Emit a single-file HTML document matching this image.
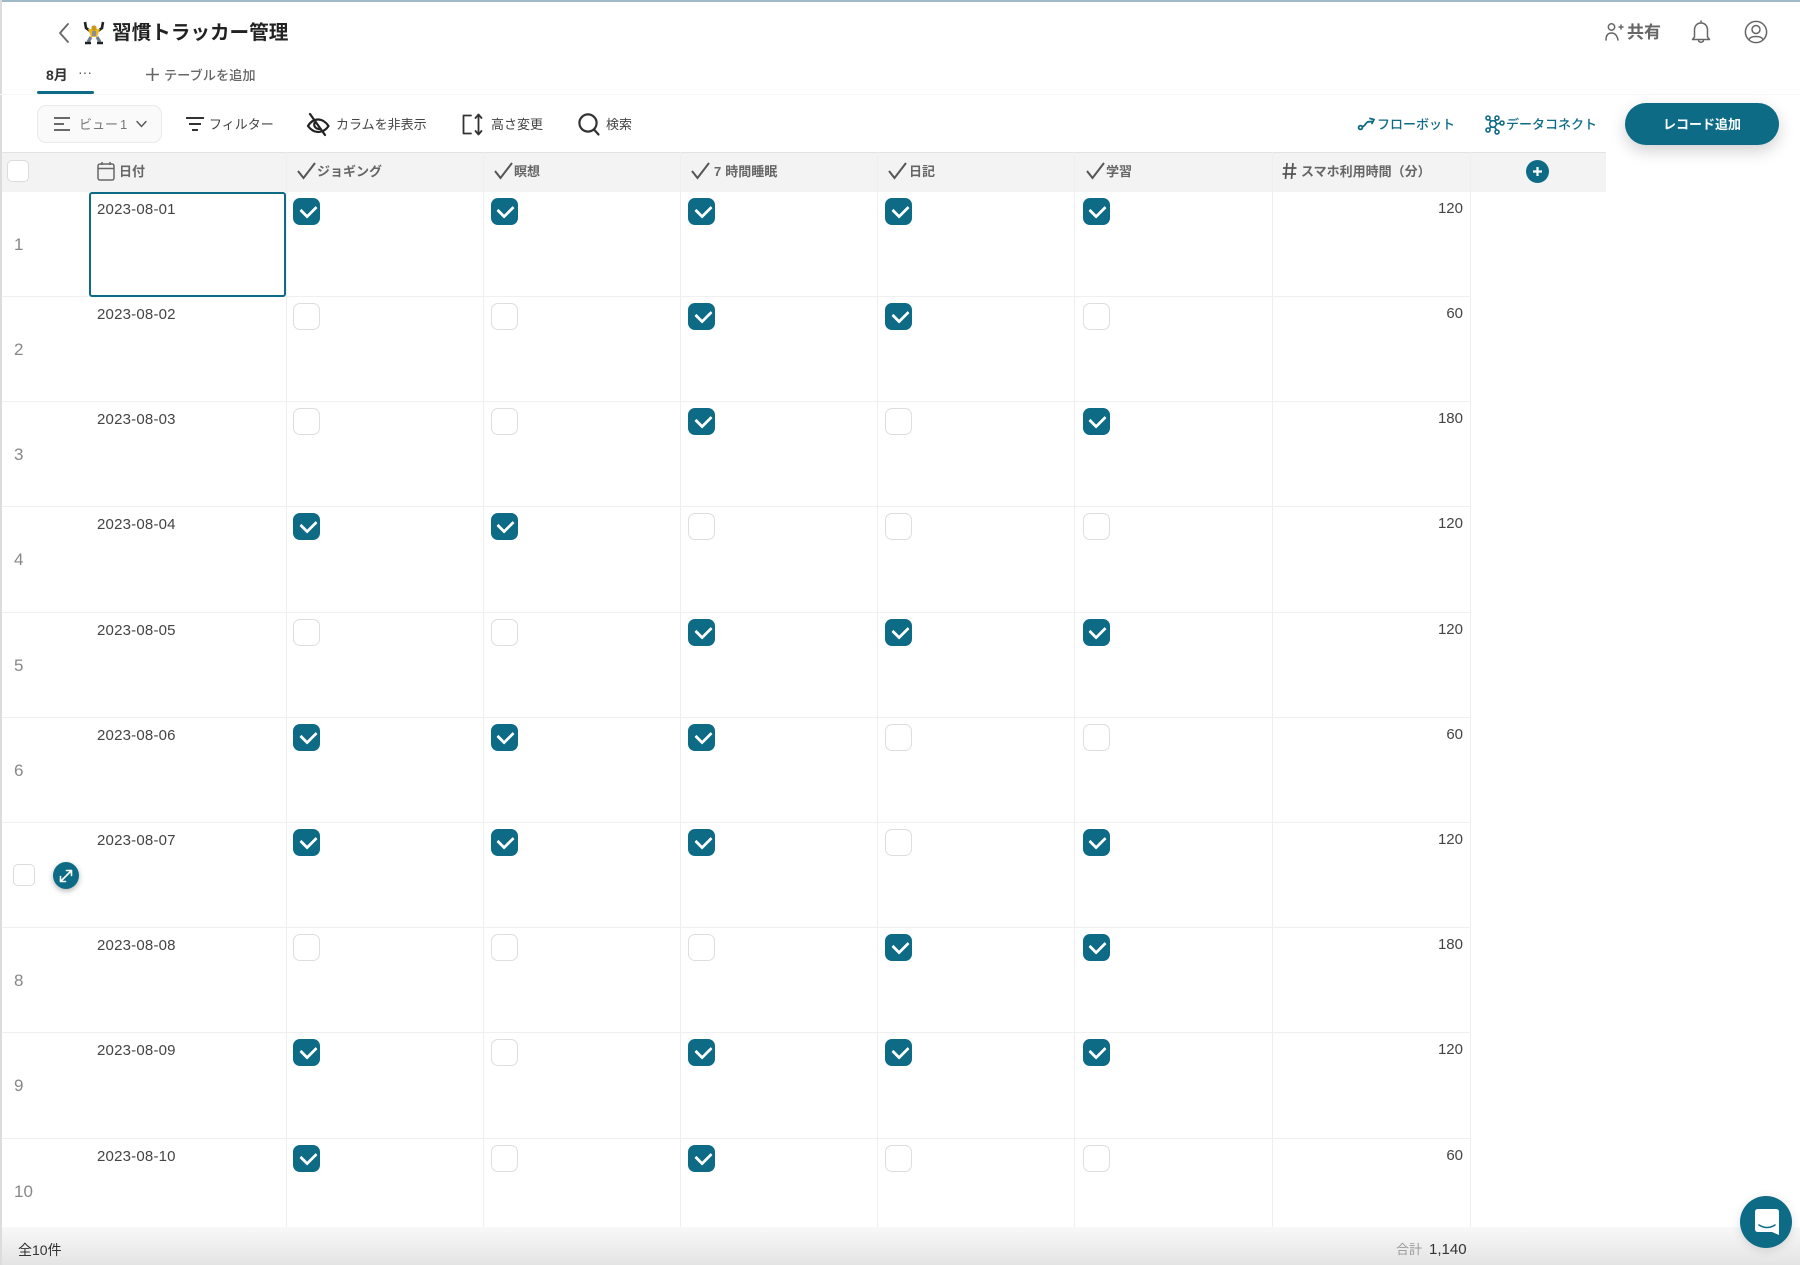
<!DOCTYPE html>
<html lang="ja"><head><meta charset="utf-8"><title>習慣トラッカー管理</title>
<style>
*{box-sizing:border-box}
html,body{margin:0;padding:0;background:#fff}
body{width:1800px;height:1265px;position:relative;overflow:hidden;font-family:"Liberation Sans","Noto Sans CJK JP",sans-serif;color:#333}
.a{position:absolute;white-space:nowrap}
svg{position:absolute;overflow:visible}
.tb{font-size:13px;line-height:20px;top:115px;color:#444}
.tl{font-size:13px;line-height:20px;top:115px;color:#0e6b85;font-weight:500}
.hd{font-size:13px;line-height:20px;top:162px;color:#666;font-weight:700}
.v{position:absolute;top:152px;height:1075px;width:1px;background:#efefef}
.hv{position:absolute;top:152px;height:40px;width:1px;background:#e6e6e6}
.r{position:absolute;left:2px;width:1468px;height:105.2px;border-bottom:1px solid #f0f0f0}
.r .n{position:absolute;left:12px;top:41px;font-size:17px;line-height:24px;color:#888}
.r .d{position:absolute;left:95px;top:7px;font-size:15px;line-height:22px;color:#444;letter-spacing:.2px}
.r .m{position:absolute;right:7px;top:6px;font-size:15px;line-height:22px;color:#444}
.b{position:absolute;top:6px;width:27px;height:27px;border-radius:7px;border:1px solid #dedede;background:#fff}
.on{background:#0e6b85;border-color:#0e6b85}
.on::after{content:"";position:absolute;left:6.500px;top:5px;width:12px;height:8px;border-left:3.500px solid #fff;border-bottom:3.500px solid #fff;border-radius:1px;transform:rotate(-45deg)}
.c1{left:291px}.c2{left:488.500px}.c3{left:686px}.c4{left:883px}.c5{left:1080.500px}
</style></head><body>

<div class="a" style="left:0;top:0;width:1800px;height:2px;background:#9fbac6"></div>
<div class="a" style="left:0;top:0;width:2px;height:1265px;background:#dcdcdc"></div>

<svg style="left:56px;top:21px" width="16" height="24" viewBox="0 0 16 24" fill="none" stroke="#666" stroke-width="1.8" stroke-linecap="round" stroke-linejoin="round"><path d="M12 3 L4 12 L12 21"/></svg>
<svg style="left:82px;top:20px" width="24" height="25" viewBox="0 0 24 25"><path d="M3 2 L4 8 L8 11 M21 2 L20 8 L16 11" fill="none" stroke="#222" stroke-width="2.600"/><path d="M6 9 H18 L15 17 H9 Z" fill="#e8b923"/><circle cx="12" cy="8" r="2.600" fill="#c9971a"/><rect x="10" y="11" width="4" height="5" fill="#8b8f90"/><path d="M9 17 L6 22 M15 17 L18 22" stroke="#6f7f8c" stroke-width="3.200"/><path d="M3 23 H9 M15 23 H21" stroke="#222" stroke-width="2.600"/></svg>
<div class="a" style="left:112px;top:18px;font-size:19.6px;line-height:30px;font-weight:700;color:#222">習慣トラッカー管理</div>

<svg style="left:1605px;top:22px" width="22" height="22" viewBox="0 0 22 22" fill="none" stroke="#666" stroke-width="1.500" stroke-linecap="round"><circle cx="6.500" cy="5" r="3.200"/><path d="M1 18 C1 13 3 11 6.500 11 C10 11 12 13 13 18"/><path d="M16 3 V7 M14 5 H18"/></svg>
<div class="a" style="left:1627px;top:20px;font-size:17px;line-height:26px;color:#666;font-weight:700">共有</div>
<svg style="left:1689px;top:20px" width="24" height="24" viewBox="0 0 24 24" fill="none" stroke="#666" stroke-width="1.500" stroke-linecap="round" stroke-linejoin="round"><path d="M12 1 V3 M5.500 17 V10 C5.500 6 8 3 12 3 C16 3 18.500 6 18.500 10 V17 L20.500 19.500 H3.500 Z"/><path d="M9.500 20 C9.500 23 14.500 23 14.500 20"/></svg>
<svg style="left:1744px;top:20px" width="24" height="24" viewBox="0 0 24 24" fill="none" stroke="#666" stroke-width="1.500" stroke-linecap="round"><circle cx="12" cy="12" r="10.600"/><circle cx="12" cy="9.500" r="4"/><path d="M5 19.500 C6.500 15.500 17.500 15.500 19 19.500"/></svg>

<div class="a" style="left:46px;top:65px;font-size:14px;line-height:20px;font-weight:700;color:#333">8月</div>
<div class="a" style="left:78px;top:62px;font-size:14px;line-height:20px;color:#555;letter-spacing:0">···</div>
<div class="a" style="left:37px;top:91px;width:57px;height:3px;background:#0e6b85;border-radius:2px"></div>
<svg style="left:145px;top:67px" width="15" height="15" viewBox="0 0 15 15" stroke="#666" stroke-width="1.600"><path d="M7.500 1 V14 M1 7.500 H14"/></svg>
<div class="a" style="left:164px;top:65.500px;font-size:13.200px;line-height:20px;color:#666;font-weight:500">テーブルを追加</div>
<div class="a" style="left:0;top:94px;width:1800px;height:1px;background:#f7f7f7"></div>

<div class="a" style="left:37px;top:105px;width:125px;height:38px;border:1px solid #eaeaea;border-radius:9px;background:#fafafa"></div>
<svg style="left:54px;top:116px" width="17" height="16" viewBox="0 0 17 16" stroke="#555" stroke-width="1.800"><path d="M0 2 H16 M0 8 H10 M0 14 H16"/></svg>
<div class="a tb" style="left:79px;color:#777">ビュー<span style="margin-left:2px">1</span></div>
<svg style="left:136px;top:120px" width="11" height="8" viewBox="0 0 11 8" fill="none" stroke="#555" stroke-width="1.400" stroke-linecap="round"><path d="M1 1.500 L5.500 6.500 L10 1.500"/></svg>
<svg style="left:186px;top:116px" width="18" height="16" viewBox="0 0 18 16" stroke="#333" stroke-width="2"><path d="M0 2 H18 M3 8 H15 M6 14 H12"/></svg>
<div class="a tb" style="left:209px">フィルター</div>
<svg style="left:307px;top:112px" width="22" height="24" viewBox="0 0 22 24" fill="none" stroke="#222" stroke-width="2.200" stroke-linecap="round" stroke-linejoin="round"><path d="M1 14 C4 9 8 7.500 11 7.500 C15 7.500 19 10 21.500 14 C19 18 15 20 11 20 C7 20 4 18 1 14 Z"/><path d="M7.500 11 C6.500 14 8.500 17 12.500 17"/><path d="M3 2 L18 23"/></svg>
<div class="a tb" style="left:336px">カラムを非表示</div>
<svg style="left:462px;top:113px" width="22" height="23" viewBox="0 0 22 23" fill="none" stroke="#333" stroke-width="1.800" stroke-linecap="round" stroke-linejoin="round"><path d="M9 2.500 H1.500 V20.500 H9"/><path d="M16.500 1.500 V21.500 M13.500 5 L16.500 1.500 L19.500 5 M13.500 18 L16.500 21.500 L19.500 18"/></svg>
<div class="a tb" style="left:491px">高さ変更</div>
<svg style="left:578px;top:113px" width="22" height="23" viewBox="0 0 22 23" fill="none" stroke="#333" stroke-width="2.200" stroke-linecap="round"><circle cx="10" cy="10" r="8.600"/><path d="M16 16.500 L20.500 21.500"/></svg>
<div class="a tb" style="left:606px">検索</div>

<svg style="left:1357px;top:115px" width="19" height="18" viewBox="0 0 19 18" fill="none" stroke="#0e6b85" stroke-width="1.800" stroke-linecap="round" stroke-linejoin="round"><circle cx="3.500" cy="12.500" r="1.900"/><path d="M5.500 11.500 C8 11.500 8.500 8 10.500 7 C12 6.300 13.500 7 14.500 6.500 M13 3.500 L17 4.500 L15 8.500"/></svg>
<div class="a tl" style="left:1377px">フローボット</div>
<svg style="left:1484px;top:113px" width="20" height="22" viewBox="0 0 20 22" fill="none" stroke="#0e6b85" stroke-width="1.600"><circle cx="4" cy="5" r="2"/><circle cx="13" cy="5" r="2"/><circle cx="18" cy="10" r="2"/><circle cx="4" cy="17" r="2"/><circle cx="13" cy="19" r="2"/><circle cx="9" cy="11" r="3.300"/><path d="M5.300 6.500 L7 8.500 M12 6.800 L11 8.500 M16 10.300 L12.300 11 M5.500 15.700 L7 13.800 M12.500 17 L10.500 14"/></svg>
<div class="a tl" style="left:1506px">データコネクト</div>
<div class="a" style="left:1625px;top:103px;width:154px;height:42px;border-radius:21px;background:#0e6b85;box-shadow:0 6px 16px rgba(0,0,0,.18);color:#fff;font-size:13px;font-weight:700;line-height:43px;text-align:center">レコード追加</div>

<div class="a" style="left:2px;top:152px;width:1604px;height:40px;background:#f3f3f3;border-top:1px solid #e2e2e2"></div>
<div class="hv" style="left:286px"></div><div class="hv" style="left:483px"></div><div class="hv" style="left:680px"></div><div class="hv" style="left:877px"></div><div class="hv" style="left:1074px"></div><div class="hv" style="left:1272px"></div><div class="hv" style="left:1470px"></div>
<div class="v" style="left:286px"></div><div class="v" style="left:483px"></div><div class="v" style="left:680px"></div><div class="v" style="left:877px"></div><div class="v" style="left:1074px"></div><div class="v" style="left:1272px"></div><div class="v" style="left:1470px"></div>

<div class="a" style="left:7px;top:160px;width:22px;height:22px;border:1px solid #dcdcdc;border-radius:5px;background:#fff"></div>
<svg style="left:97px;top:161px" width="18" height="20" viewBox="0 0 18 20" fill="none" stroke="#666" stroke-width="1.500"><rect x="1" y="3" width="16" height="16" rx="2"/><path d="M1 7.500 H17 M5 1 V4 M13 1 V4"/></svg>
<div class="a hd" style="left:119px">日付</div>
<svg style="left:297px;top:162px" width="19" height="18" viewBox="0 0 19 18" fill="none" stroke="#555" stroke-width="2"><path d="M1 9 L6.500 16 L18 1"/></svg>
<div class="a hd" style="left:317px">ジョギング</div>
<svg style="left:494px;top:162px" width="19" height="18" viewBox="0 0 19 18" fill="none" stroke="#555" stroke-width="2"><path d="M1 9 L6.500 16 L18 1"/></svg>
<div class="a hd" style="left:514px">瞑想</div>
<svg style="left:691px;top:162px" width="19" height="18" viewBox="0 0 19 18" fill="none" stroke="#555" stroke-width="2"><path d="M1 9 L6.500 16 L18 1"/></svg>
<div class="a hd" style="left:714px">7<span style="margin-left:4px">時間睡眠</span></div>
<svg style="left:888px;top:162px" width="19" height="18" viewBox="0 0 19 18" fill="none" stroke="#555" stroke-width="2"><path d="M1 9 L6.500 16 L18 1"/></svg>
<div class="a hd" style="left:909px">日記</div>
<svg style="left:1086px;top:162px" width="19" height="18" viewBox="0 0 19 18" fill="none" stroke="#555" stroke-width="2"><path d="M1 9 L6.500 16 L18 1"/></svg>
<div class="a hd" style="left:1106px">学習</div>
<svg style="left:1282px;top:162px" width="15" height="18" viewBox="0 0 15 18" fill="none" stroke="#555" stroke-width="1.700"><path d="M5 1 L3.500 17 M11 1 L9.500 17 M1 6 H14.500 M0.500 12 H14"/></svg>
<div class="a hd" style="left:1301px">スマホ利用時間（分）</div>
<div class="a" style="left:1526px;top:160px;width:23px;height:23px;border-radius:50%;background:#0e6b85"></div>
<svg style="left:1532px;top:166px" width="11" height="11" viewBox="0 0 11 11" stroke="#fff" stroke-width="2.200"><path d="M5.500 1 V10 M1 5.500 H10"/></svg>

<div class="r" style="top:191.800px"><span class="n">1</span><span class="d">2023-08-01</span><i class="b c1 on"></i><i class="b c2 on"></i><i class="b c3 on"></i><i class="b c4 on"></i><i class="b c5 on"></i><span class="m">120</span></div>
<div class="r" style="top:297px"><span class="n">2</span><span class="d">2023-08-02</span><i class="b c1"></i><i class="b c2"></i><i class="b c3 on"></i><i class="b c4 on"></i><i class="b c5"></i><span class="m">60</span></div>
<div class="r" style="top:402.200px"><span class="n">3</span><span class="d">2023-08-03</span><i class="b c1"></i><i class="b c2"></i><i class="b c3 on"></i><i class="b c4"></i><i class="b c5 on"></i><span class="m">180</span></div>
<div class="r" style="top:507.400px"><span class="n">4</span><span class="d">2023-08-04</span><i class="b c1 on"></i><i class="b c2 on"></i><i class="b c3"></i><i class="b c4"></i><i class="b c5"></i><span class="m">120</span></div>
<div class="r" style="top:612.600px"><span class="n">5</span><span class="d">2023-08-05</span><i class="b c1"></i><i class="b c2"></i><i class="b c3 on"></i><i class="b c4 on"></i><i class="b c5 on"></i><span class="m">120</span></div>
<div class="r" style="top:717.800px"><span class="n">6</span><span class="d">2023-08-06</span><i class="b c1 on"></i><i class="b c2 on"></i><i class="b c3 on"></i><i class="b c4"></i><i class="b c5"></i><span class="m">60</span></div>
<div class="r" style="top:823px"><span class="d">2023-08-07</span><i class="b c1 on"></i><i class="b c2 on"></i><i class="b c3 on"></i><i class="b c4"></i><i class="b c5 on"></i><span class="m">120</span></div>
<div class="r" style="top:928.200px"><span class="n">8</span><span class="d">2023-08-08</span><i class="b c1"></i><i class="b c2"></i><i class="b c3"></i><i class="b c4 on"></i><i class="b c5 on"></i><span class="m">180</span></div>
<div class="r" style="top:1033.400px"><span class="n">9</span><span class="d">2023-08-09</span><i class="b c1 on"></i><i class="b c2"></i><i class="b c3 on"></i><i class="b c4 on"></i><i class="b c5 on"></i><span class="m">120</span></div>
<div class="r" style="top:1138.600px;height:88px;border:0"><span class="n">10</span><span class="d">2023-08-10</span><i class="b c1 on"></i><i class="b c2"></i><i class="b c3 on"></i><i class="b c4"></i><i class="b c5"></i><span class="m">60</span></div>

<div class="a" style="left:89px;top:192px;width:197px;height:105px;border:2px solid #0e6b85;border-radius:3px;background:transparent"></div>

<div class="a" style="left:13px;top:864px;width:22px;height:22px;border:1px solid #dcdcdc;border-radius:5px;background:#fff"></div>
<div class="a" style="left:53px;top:862px;width:26px;height:27px;border-radius:50%;background:#0e6b85;box-shadow:0 2px 6px rgba(0,0,0,.3)"></div>
<svg style="left:59px;top:869px" width="14" height="14" viewBox="0 0 14 14" fill="none" stroke="#fff" stroke-width="1.600" stroke-linecap="round" stroke-linejoin="round"><path d="M1.500 12.500 L12.500 1.500 M7.500 1.500 H12.500 V6.500 M1.500 7.500 V12.500 H6.500"/></svg>

<div class="a" style="left:2px;top:1227px;width:1798px;height:38px;background:linear-gradient(#f8f8f8,#e4e4e4)"></div>
<div class="a" style="left:18px;top:1240px;font-size:14px;line-height:20px;color:#333">全10件</div>
<div class="a" style="left:1396px;top:1240px;font-size:13px;line-height:20px;color:#999">合計</div>
<div class="a" style="left:1429px;top:1240px;font-size:15px;line-height:20px;color:#333">1,140</div>

<div class="a" style="left:1740px;top:1196px;width:52px;height:52px;border-radius:50%;background:#0e6b85;box-shadow:0 2px 10px rgba(0,0,0,.12)"></div>
<svg style="left:1755px;top:1209px" width="24" height="27" viewBox="0 0 24 27"><path d="M3 0 H21 Q24 0 24 3 V26 L17 23 H3 Q0 23 0 20 V3 Q0 0 3 0 Z" fill="#fff"/><path d="M4 16 Q12 21 20 16" fill="none" stroke="#0e6b85" stroke-width="1.600" stroke-linecap="round"/></svg>
</body></html>
